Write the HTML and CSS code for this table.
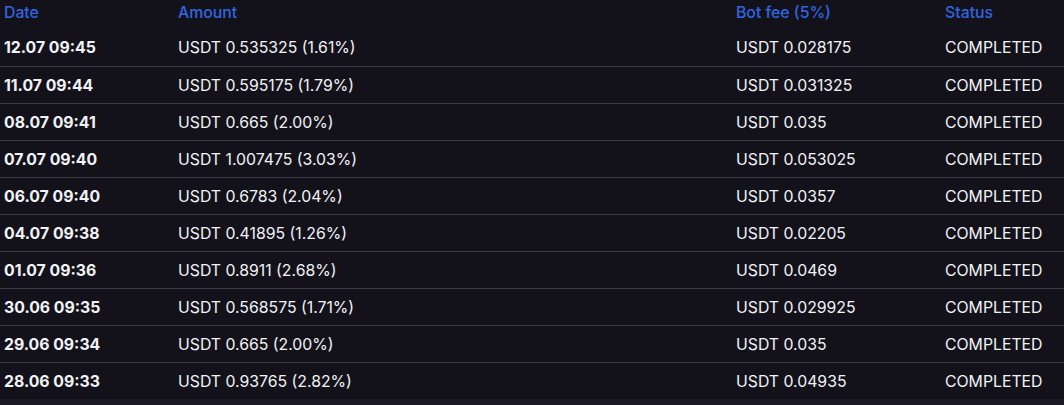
FILE: index.html
```html
<!DOCTYPE html>
<html>
<head>
<meta charset="utf-8">
<link rel="stylesheet" href="styles.css">
</head>
<body>
<div class="page">
  <div class="table">
    <div class="row head">
      <div class="c date">Date</div>
      <div class="c amount">Amount</div>
      <div class="c fee">Bot fee (5%)</div>
      <div class="c status">Status</div>
    </div>
    <div class="row"><div class="c date">12.07 09:45</div><div class="c amount">USDT 0.535325 (1.61%)</div><div class="c fee">USDT 0.028175</div><div class="c status">COMPLETED</div></div>
    <div class="row"><div class="c date">11.07 09:44</div><div class="c amount">USDT 0.595175 (1.79%)</div><div class="c fee">USDT 0.031325</div><div class="c status">COMPLETED</div></div>
    <div class="row"><div class="c date">08.07 09:41</div><div class="c amount">USDT 0.665 (2.00%)</div><div class="c fee">USDT 0.035</div><div class="c status">COMPLETED</div></div>
    <div class="row"><div class="c date">07.07 09:40</div><div class="c amount">USDT 1.007475 (3.03%)</div><div class="c fee">USDT 0.053025</div><div class="c status">COMPLETED</div></div>
    <div class="row"><div class="c date">06.07 09:40</div><div class="c amount">USDT 0.6783 (2.04%)</div><div class="c fee">USDT 0.0357</div><div class="c status">COMPLETED</div></div>
    <div class="row"><div class="c date">04.07 09:38</div><div class="c amount">USDT 0.41895 (1.26%)</div><div class="c fee">USDT 0.02205</div><div class="c status">COMPLETED</div></div>
    <div class="row"><div class="c date">01.07 09:36</div><div class="c amount">USDT 0.8911 (2.68%)</div><div class="c fee">USDT 0.0469</div><div class="c status">COMPLETED</div></div>
    <div class="row"><div class="c date">30.06 09:35</div><div class="c amount">USDT 0.568575 (1.71%)</div><div class="c fee">USDT 0.029925</div><div class="c status">COMPLETED</div></div>
    <div class="row"><div class="c date">29.06 09:34</div><div class="c amount">USDT 0.665 (2.00%)</div><div class="c fee">USDT 0.035</div><div class="c status">COMPLETED</div></div>
    <div class="row last"><div class="c date">28.06 09:33</div><div class="c amount">USDT 0.93765 (2.82%)</div><div class="c fee">USDT 0.04935</div><div class="c status">COMPLETED</div></div>
  </div>
  <div class="footer"></div>
</div>
</body>
</html>
```
FILE: styles.css
```css
html, body {
  margin: 0;
  padding: 0;
  background: #1a1923;
}
body {
  font-family: Inter, "Noto Sans", sans-serif;
  font-size: 15.8px;
  color: #f2f2f4;
}
.page {
  width: 1064px;
  height: 405px;
  display: flex;
  flex-direction: column;
}
.table {
  background: #13121b;
  display: flex;
  flex-direction: column;
}
.row {
  display: grid;
  grid-template-columns: 178px 558px 209px 1fr;
  height: 37px;
  align-items: center;
  border-top: 1px solid #3a3944;
  box-sizing: border-box;
}
.row.head {
  height: 29px;
  border-top: none;
  padding-bottom: 5px;
}
.row.head + .row {
  border-top: none;
}
.head .c {
  color: #3166e0;
  font-weight: 500;
}
.c.date {
  padding-left: 4px;
}
.row .date {
  font-weight: 700;
}
.row.head .date {
  font-weight: 500;
}
.footer {
  flex: 1;
  background: #1b1a24;
}
```
